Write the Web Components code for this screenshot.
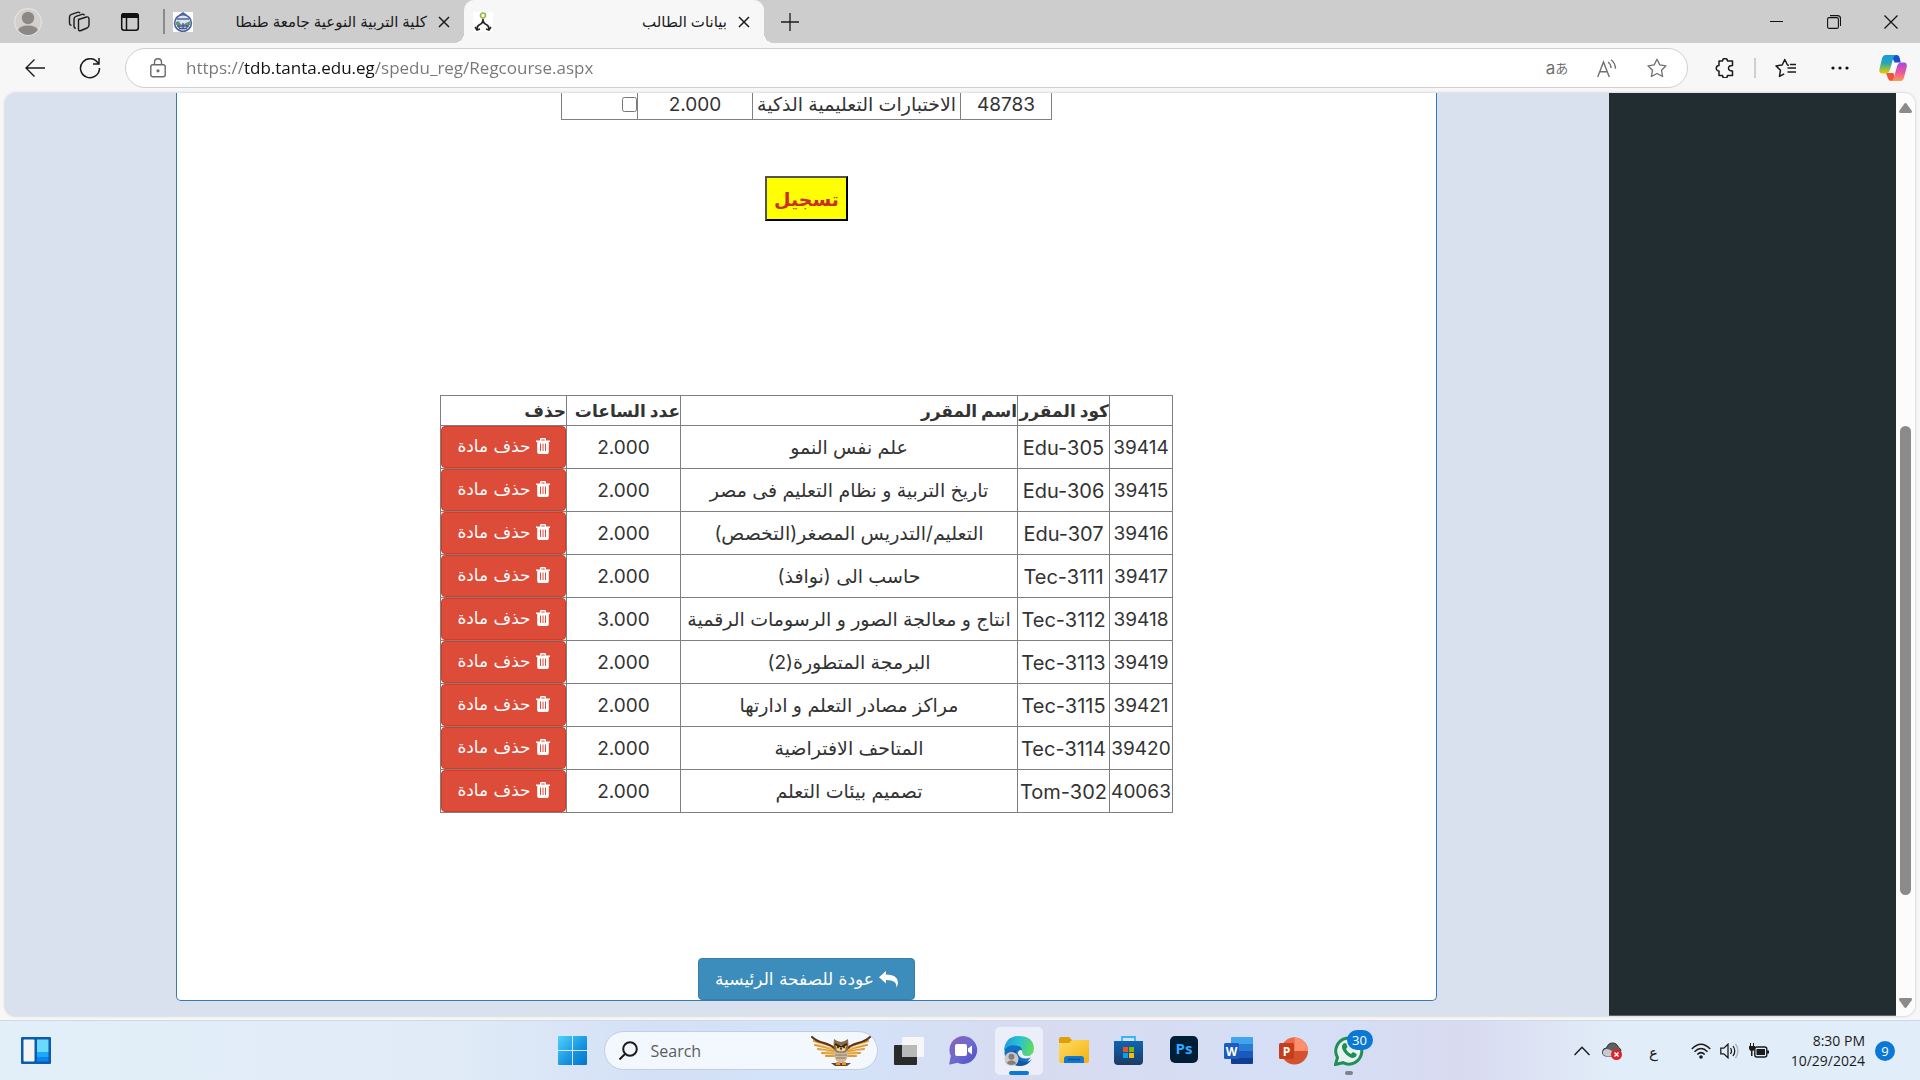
<!DOCTYPE html>
<html lang="ar">
<head>
<meta charset="utf-8">
<title>بيانات الطالب</title>
<style>
  html, body { height: 100%; }
  body { margin: 0; display: flex; flex-direction: column; background: #f7f7f7; overflow: hidden;
         font-family: "Open Sans", "DejaVu Sans", sans-serif; color: #1b1b1b; }
</style>
</head>
<body>
<tab-strip>
  <browser-tab label="كلية التربية النوعية جامعة طنطا">
    <svg slot="icon" width="20" height="20" viewBox="0 0 20 20"><rect width="20" height="20" fill="#fff"/><circle cx="10" cy="11" r="8.4" fill="#dfe6f3" stroke="#5262a0" stroke-width="1.6"/><path d="M7 3l3-2 3 2M4 7h12" stroke="#5262a0" stroke-width="1.6" fill="none"/><path d="M3 10q3-2 4 1t6 0 4-1v3H3z" fill="#5d9a72"/><path d="M4 14h12M6 16.500h8M6 13v3M10 11v5M14 13v3" stroke="#44558f" stroke-width="1.300"/></svg>
  </browser-tab>
  <browser-tab label="بيانات الطالب" active>
    <svg slot="icon" width="20" height="20" viewBox="0 0 20 20" fill="none"><rect width="20" height="20" fill="#fff"/><circle cx="10" cy="3.500" r="2.500" stroke="#94b83d" stroke-width="1.700"/><path d="M10 7v3M10 9q-1 3-4 4-2 1-2 4M10 9q1 3 4 4 2 1 2 4" stroke="#222" stroke-width="1.800"/><path d="M2 15l2 3 3-1M18 15l-2 3-3-1" stroke="#222" stroke-width="1.600"/></svg>
  </browser-tab>
</tab-strip>
<browser-toolbar></browser-toolbar>
<page-view>
  <content-panel>
    <course-picker></course-picker>
    <register-button>تسجيل</register-button>
    <course-table></course-table>
    <home-button>عودة للصفحة الرئيسية</home-button>
  </content-panel>
</page-view>
<task-bar></task-bar>

<script>
const define = (name, html, setup) => customElements.define(name, class extends HTMLElement {
  connectedCallback() {
    if (this.shadowRoot) return;
    const root = this.attachShadow({ mode: 'open' });
    root.innerHTML = `<style>:host,*{box-sizing:border-box}button{font:inherit;color:inherit;background:none;border:0;padding:0;margin:0}svg{display:block;flex:none}</style>` + html;
    if (setup) setup(this, root);
  }
});

/* ---------- browser window ---------- */
define('browser-tab', `
<style>
  :host { display: flex; flex: none; align-items: center; width: 300px; height: 43px; padding: 0 9px; position: relative; }
  :host([active]) { background: #f7f7f7; border-radius: 10px 10px 0 0; }
  :host([active])::before, :host([active])::after { content: ""; position: absolute; bottom: 0; width: 10px; height: 10px; }
  :host([active])::before { left: -10px; background: radial-gradient(circle at 0 0, #cdcdcd 10px, #f7f7f7 10px); }
  :host([active])::after { right: -10px; background: radial-gradient(circle at 100% 0, #cdcdcd 10px, #f7f7f7 10px); }
  .title { flex: 1; direction: rtl; font-size: 15px; line-height: 24px; white-space: nowrap; padding-bottom: 2px; }
  button { width: 22px; height: 22px; margin-left: 6px; display: grid; place-items: center; }
</style>
<slot name="icon"></slot><span class="title"></span>
<button aria-label="Close tab"><svg width="12" height="12" viewBox="0 0 12 12" stroke="#1b1b1b" stroke-width="1.500"><path d="M1 1l10 10M11 1L1 11"/></svg></button>
`, (el, root) => { root.querySelector('.title').textContent = el.getAttribute('label'); });

define('tab-strip', `
<style>
  :host { display: flex; flex: none; height: 43px; align-items: center; background: #cdcdcd; padding-right: 1px; }
  .lead { display: flex; flex: none; width: 163px; align-items: center; padding-left: 14px; gap: 23px; }
  button { display: grid; place-items: center; width: 28px; height: 28px; }
  .bar { width: 2px; height: 25px; background: #8a8a8a; margin-right: -1px; }
  .new { margin-left: 12px; }
  .win { margin-left: auto; display: flex; }
  .win button { width: 57px; }
</style>
<div class="lead">
  <button aria-label="Profile"><svg width="28" height="28" viewBox="0 0 28 28"><circle cx="14" cy="14" r="13.300" fill="#d2d0ce" stroke="#e4e3e2" stroke-width="1.200"/><circle cx="14" cy="10" r="6.200" fill="#8b8885"/><path d="M4 22q2-4.500 10-4.500T24 22q-4 5-10 5T4 22z" fill="#8b8885"/></svg></button>
  <button aria-label="Workspaces"><svg width="24" height="24" viewBox="0 0 24 24" fill="none" stroke="#1b1b1b" stroke-width="1.400" stroke-linejoin="round"><path d="M11.500 9.500l8-2.500q2.500-.5 2.500 2v6q0 2-2 3l-6 2.500q-2.500 1-2.500-1.500z"/><path d="M9 18q-2 .5-2-2V9q0-2 2-2.600l6-2q2-.6 2.500 1"/><path d="M4.500 15q-2 .5-2-2V7q0-2 2-2.700l6-2q2-.6 2.500 1"/></svg></button>
  <button aria-label="Tab actions"><svg width="20" height="20" viewBox="0 0 20 20" fill="none" stroke="#111" stroke-width="1.500"><rect x="1.700" y="1.700" width="16.600" height="16.600" rx="2.500"/><path d="M1 6V4q0-3 3-3h12q3 0 3 3v2z" fill="#111" stroke="none"/><path d="M6.500 6v12"/></svg></button>
</div>
<span class="bar"></span>
<slot></slot>
<button class="new" aria-label="New tab"><svg width="18" height="18" viewBox="0 0 18 18" stroke="#1b1b1b" stroke-width="1.300"><path d="M9 0v18M0 9h18"/></svg></button>
<div class="win">
  <button aria-label="Minimize"><svg width="13" height="13" viewBox="0 0 13 13" stroke="#111"><path d="M0 6.500h13"/></svg></button>
  <button aria-label="Restore"><svg width="14" height="14" viewBox="0 0 14 14" fill="none" stroke="#111" stroke-width="1.100"><rect x=".6" y="2.600" width="10.800" height="10.800" rx="1.500"/><path d="M3 .6h7.500q3 0 3 3V11"/></svg></button>
  <button aria-label="Close"><svg width="14" height="14" viewBox="0 0 14 14" stroke="#111" stroke-width="1.200"><path d="M.5.5l13 13M13.500.5l-13 13"/></svg></button>
</div>`);

define('browser-toolbar', `
<style>
  :host { display: flex; flex: none; height: 50px; align-items: center; background: #f7f7f7; padding: 0 12px 0 20px; }
  button { display: grid; place-items: center; width: 30px; height: 30px; flex: none; }
  .reload { margin-left: 25px; }
  .pill { display: flex; flex: 1; align-items: center; height: 40px; margin: 0 22px 0 20px; padding: 0 15px 0 24px; background: #fff; border: 1px solid #d0d0d0; border-radius: 20px; gap: 20px; }
  input { flex: 1; min-width: 0; border: 0; outline: 0; padding: 0; margin: 0; font: 17px/26px "Open Sans", sans-serif;
    color: #767676; -webkit-text-fill-color: transparent;
    background: linear-gradient(90deg, #767676 57px, #111 57px 188px, #767676 188px); -webkit-background-clip: text; background-clip: text; }
  .trans { display: flex; align-items: center; justify-content: center; font: 17px/30px Inter, "Noto Sans CJK JP", sans-serif; color: #707070; }
  .trans small { font: 13px/30px "Noto Sans CJK JP", sans-serif; }
  .right { display: flex; align-items: center; }
  .sep { width: 2px; height: 20px; background: #cfcfcf; margin: 0 14px; }
  .more { margin: 0 23px 0 25px; }
</style>
<button aria-label="Back"><svg width="20" height="18" viewBox="0 0 20 18" fill="none" stroke="#1b1b1b" stroke-width="1.400"><path d="M20 9H1M9.500.5L1 9l8.500 8.500"/></svg></button>
<button class="reload" aria-label="Refresh"><svg width="22" height="22" viewBox="0 0 22 22" fill="none" stroke="#1b1b1b" stroke-width="1.500"><path d="M19.500 7A9.500 9.500 0 1 0 20.500 11M20 1v6h-6"/></svg></button>
<div class="pill">
  <svg width="16" height="20" viewBox="0 0 16 20" fill="none" stroke="#6b6b6b" stroke-width="1.400"><rect x=".8" y="6.800" width="14.400" height="12" rx="2"/><path d="M4.500 6.500V4.300q0-3.500 3.500-3.500t3.500 3.500v2.200"/><circle cx="8" cy="12.800" r=".9" fill="#6b6b6b"/></svg>
  <input type="text" aria-label="Address" value="https://tdb.tanta.edu.eg/spedu_reg/Regcourse.aspx">
  <button class="trans" aria-label="Translate">a<small>あ</small></button>
  <button aria-label="Read aloud"><svg width="20" height="19" viewBox="0 0 20 19" fill="none" stroke="#707070" stroke-width="1.400"><path d="M.7 18L6.500 3 12.300 18M2.800 12.700h7.400M11 3q3 2 3 6M14 .7q4.500 3.500 4.500 9"/></svg></button>
  <button aria-label="Favorite"><svg width="20" height="20" viewBox="0 0 20 20" fill="none" stroke="#707070" stroke-width="1.300" stroke-linejoin="round"><path d="M10 1.200l2.800 5.700 6.200.9-4.500 4.400 1.100 6.300L10 15.500l-5.600 3 1.100-6.300L1 7.800l6.200-.9z"/></svg></button>
</div>
<div class="right">
  <button aria-label="Extensions"><svg width="20" height="20" viewBox="0 0 20 20" fill="none" stroke="#1b1b1b" stroke-width="1.500" stroke-linejoin="round"><path d="M4 3h3.500a2.500 2.500 0 0 1 5 0H17.500v4.500q-4 0-4 2.700t4 2.700V17.500h-5a2.500 2.500 0 0 1-5 0H4v-4.500a2.600 2.600 0 0 1 0-5.500z"/></svg></button>
  <span class="sep"></span>
  <button aria-label="Favorites list"><svg width="21" height="20" viewBox="0 0 21 20" fill="none" stroke="#1b1b1b" stroke-width="1.500" stroke-linejoin="round"><path d="M14 7.300l-1.500-.3L9.800 1.500 7.200 7l-6.200.9 4.500 4.300-1 6.200 4.700-2.500M12.500 10h8.500M12.500 14h8.500M15 6.500h6"/></svg></button>
  <button class="more" aria-label="More"><svg width="18" height="4" viewBox="0 0 18 4" fill="#111"><circle cx="2" cy="2" r="1.600"/><circle cx="9" cy="2" r="1.600"/><circle cx="16" cy="2" r="1.600"/></svg></button>
  <button aria-label="Copilot"><svg width="28" height="26" viewBox="0 0 28 26"><defs><linearGradient id="a" x1="0" y1="0" x2="0" y2="1"><stop stop-color="#159be0"/><stop offset=".45" stop-color="#2aa6b8"/><stop offset=".75" stop-color="#96c13a"/><stop offset="1" stop-color="#f2c400"/></linearGradient><linearGradient id="b" x1="0" y1="0" x2="0" y2="1"><stop stop-color="#a24be6"/><stop offset=".5" stop-color="#e8559a"/><stop offset="1" stop-color="#fb9a56"/></linearGradient></defs><path d="M12 0h5.500q2.500 0 3.200 3l1 4.500h-6z" fill="#1a4bd0"/><path d="M7 18l2 5.500q.8 2.500 3.500 2.500h4l-2-8z" fill="#f0553a"/><path d="M6.500 0H17q-2 .5-3 4l-3 10.500q-1.200 4-4.500 4H3.500Q-.5 18.500.5 14L3 3.500Q4 0 6.500 0z" fill="url(#a)"/><path d="M21.500 26H12q2-.5 3-4l3-10.500q1-4 4.500-4H25q3.500 0 2.700 4.500L25 22.500Q24 26 21.500 26z" fill="url(#b)"/><path d="M14.500 8h4l-3.500 10h-4z" fill="#fff" opacity=".85"/></svg></button>
</div>`);

/* ---------- web page ---------- */
define('page-view', `
<style>
  :host { display: flex; flex: 1; min-height: 0; margin: 0 5px 4px; border-radius: 11px; overflow: hidden; background: #d8e1ed; box-shadow: 0 0 2px 1px #dcdcdc; }
  main { flex: 1; display: flex; padding: 0 172px 15px 171px; }
  aside { width: 287px; background: #222d32; border-bottom: 1px solid #5a6367; }
  .scroll { width: 19px; display: flex; flex-direction: column; align-items: center; justify-content: space-between; background: #fcfcfc; padding: 10px 0 8px; }
  .thumb { width: 11px; height: 469px; border-radius: 6px; background: #8b8b8b; margin: 313px 0 auto; }
</style>
<main><slot></slot></main>
<aside></aside>
<div class="scroll">
  <svg width="13" height="10" viewBox="0 0 13 10" fill="#8b8b8b"><path d="M5.300.8q1.200-1.500 2.400 0l5 7q.8 2-1 2.200H1.300Q-.5 9.800.3 7.800z"/></svg>
  <div class="thumb"></div>
  <svg width="13" height="10" viewBox="0 0 13 10" fill="#8b8b8b"><path d="M5.300 9.200q1.200 1.500 2.400 0l5-7q.8-2-1-2.200H1.300Q-.5.2.3 2.200z"/></svg>
</div>`);

define('content-panel', `
<style>
  :host { flex: 1; display: flex; flex-direction: column; align-items: center; direction: rtl; background: #fff; color: #333;
    border: 1px solid #337ab7; border-top: 0; border-radius: 0 0 5px 5px; font: 19px/29px Inter, "DejaVu Sans", sans-serif; }
</style><slot></slot>`);

const tableCss = `
  table { border-collapse: collapse; table-layout: fixed; }
  td, th { border: 1px solid #808080; padding: 0; white-space: nowrap; text-align: center; }
  .code { font-size: 20px; }`;

define('course-picker', `
<style>:host { display: block; } ${tableCss}
  table { width: 490px; margin-top: -4px; }
  td { height: 30px; line-height: 28px; }
  .pick { text-align: right; }
  input { display: block; width: 15px; height: 15px; margin: 0; }
</style>
<table><colgroup><col style="width:91px"><col style="width:208px"><col style="width:115px"><col style="width:76px"></colgroup>
<tr><td>48783</td><td>الاختبارات التعليمية الذكية</td><td>2.000</td><td class="pick"><input type="checkbox" aria-label="الاختبارات التعليمية الذكية"></td></tr></table>`);

define('register-button', `
<style>
  :host { display: block; margin: 56px 0 174px; }
  button { display: block; width: 83px; height: 45px; background: #ff0; border: 2px outset #000; color: #c9302c; font: bold 19px/30px "DejaVu Sans", sans-serif; }
</style><button type="button"><slot></slot></button>`);

define('delete-button', `
<style>
  :host { display: block; }
  button { display: flex; width: 100%; height: 42px; align-items: center; justify-content: center; gap: 5px; background: #dd4b39; border: 1px solid #d73925; border-radius: 4px; color: #fff; font: 17px/24px "DejaVu Sans", sans-serif; padding-bottom: 3px; }
</style>
<button type="button"><svg width="14" height="16" viewBox="0 0 14 16"><path d="M4 2.500V1.300Q4 0 5.300 0h3.400Q10 0 10 1.300v1.200h4V4h-1.200v10q0 2-1.800 2H3q-1.800 0-1.800-2V4H0V2.500zm1.300 0h3.400v-1H5.300z" fill="#fff"/><path d="M4.500 5.500V13M7 5.500V13M9.500 5.500V13" stroke="#dd4b39" stroke-width="1"/></svg><slot></slot></button>`);

const courses = [
  ['39414', 'Edu-305', 'علم نفس النمو', '2.000'],
  ['39415', 'Edu-306', 'تاريخ التربية و نظام التعليم فى مصر', '2.000'],
  ['39416', 'Edu-307', 'التعليم/التدريس المصغر(التخصص)', '2.000'],
  ['39417', 'Tec-3111', 'حاسب الى (نوافذ)', '2.000'],
  ['39418', 'Tec-3112', 'انتاج و معالجة الصور و الرسومات الرقمية', '3.000'],
  ['39419', 'Tec-3113', 'البرمجة المتطورة(2)', '2.000'],
  ['39421', 'Tec-3115', 'مراكز مصادر التعلم و ادارتها', '2.000'],
  ['39420', 'Tec-3114', 'المتاحف الافتراضية', '2.000'],
  ['40063', 'Tom-302', 'تصميم بيئات التعلم', '2.000'],
];
define('course-table', `
<style>:host { display: block; } ${tableCss}
  table { width: 732px; }
  th { height: 30px; line-height: 28px; text-align: right; font-size: 17px; font-weight: bold; }
  td { height: 43px; line-height: 30px; }
  td:not(:last-child) { padding-top: 2px; }
</style>
<table><colgroup><col style="width:63px"><col style="width:92px"><col style="width:337px"><col style="width:114px"><col style="width:126px"></colgroup>
<thead><tr><th></th><th>كود المقرر</th><th>اسم المقرر</th><th>عدد الساعات</th><th>حذف</th></tr></thead>
<tbody>${courses.map(([id, code, name, hours]) => `<tr><td>${id}</td><td class="code"><bdi>${code}</bdi></td><td>${name}</td><td>${hours}</td><td><delete-button>حذف مادة</delete-button></td></tr>`).join('')}</tbody></table>`);

define('home-button', `
<style>
  :host { display: block; margin-top: auto; }
  button { display: flex; width: 217px; height: 42px; align-items: center; justify-content: center; gap: 5px; background: #3c8dbc; border: 1px solid #367fa9; border-radius: 4px; color: #fff; font: 17px/24px "DejaVu Sans", sans-serif; }
</style>
<button type="button"><svg width="19" height="17" viewBox="0 0 19 17" fill="#fff"><path d="M7 0v3.500q11.500 0 12 8 0 3-2 5.500 1-4-1.500-6T7 9v3.500L0 6.200z"/></svg><slot></slot></button>`);

/* ---------- taskbar ---------- */
const icons = {
  view: `<svg width="30" height="28" viewBox="0 0 30 28"><rect y="8" width="23" height="20" rx="1" fill="#2b2b2b"/><rect x="8" width="22" height="20" rx="1" fill="#f7f7f7"/><path d="M8 8h15v12H8z" fill="#b9b9b9"/></svg>`,
  chat: `<svg width="29" height="29" viewBox="0 0 29 29"><defs><linearGradient id="c" x1="0" y1="0" x2="1" y2="1"><stop stop-color="#8b62b0"/><stop offset=".5" stop-color="#6d6ad0"/><stop offset="1" stop-color="#4c4fc4"/></linearGradient></defs><path d="M14.500 0a14 14 0 1 1-6 26.800L1 28.500q-1 0-.7-1L1.800 20A14 14 0 0 1 14.500 0z" fill="url(#c)"/><rect x="6" y="8" width="12" height="12" rx="2" fill="#fff"/><path d="M19 12.500l4-3v9l-4-3z" fill="#fff"/></svg>`,
  edge: `<svg width="30" height="30" viewBox="0 0 30 30"><defs><linearGradient id="e" x1="0" y1=".3" x2="1" y2=".5"><stop stop-color="#1b9de2"/><stop offset=".5" stop-color="#2cc3cf"/><stop offset="1" stop-color="#62dc5c"/></linearGradient></defs><circle cx="14" cy="16" r="13.500" fill="#1470c5"/><path d="M0 15Q1 0 15 0q14 0 15 12 0 8-7.500 8-6 0-4.500-4 1-6-6-6.500Q3 8.500 0 15z" fill="url(#e)"/><path d="M12 14q-2 10 9 12 4 .5 7-3-5 8-14 7-9-2-8-10 1-5 6-6z" fill="#15579f"/><path d="M13.500 17q1.500-4 4.500-2.500 0 5.500 4.500 5.500 4 0 6-2.500-1 5-6 5-7 .5-9-5.500z" fill="#eef0fa"/><circle cx="7.500" cy="23" r="7" fill="#ccc9c6"/><circle cx="7.500" cy="20.700" r="3" fill="#817e7b"/><path d="M2.500 27q5-5.500 10 0-5 4-10 0z" fill="#817e7b"/></svg>`,
  files: `<svg width="30" height="27" viewBox="0 0 30 27"><defs><linearGradient id="f" x1="0" y1="0" x2="1" y2="1"><stop stop-color="#ffdc66"/><stop offset="1" stop-color="#f5b10e"/></linearGradient></defs><path d="M0 2q0-2 2-2h8l3 3h15q2 0 2 2v4H0z" fill="#e0a004"/><path d="M0 6h10l3-3h15q2 0 2 2v19q0 2-2 2H2q-2 0-2-2z" fill="url(#f)"/><path d="M5 26v-4q0-3 3-3h14q3 0 3 3v4z" fill="#1278cf"/><path d="M9 22.500h12" stroke="#0b4f94" stroke-width="1.500"/></svg>`,
  store: `<svg width="29" height="29" viewBox="0 0 29 29"><defs><linearGradient id="s" x1="0" y1="0" x2="0" y2="1"><stop stop-color="#0c65b4"/><stop offset="1" stop-color="#1e3a63"/></linearGradient></defs><path d="M8 6V1h13v5" fill="none" stroke="#35b8ee" stroke-width="1.800"/><path d="M0 5h29v20q0 4-4 4H4q-4 0-4-4z" fill="url(#s)"/><path d="M9 11h5v5H9z" fill="#f25022"/><path d="M15 11h5v5h-5z" fill="#7fba00"/><path d="M9 17h5v5H9z" fill="#00a4ef"/><path d="M15 17h5v5h-5z" fill="#ffb900"/></svg>`,
  ps: `<svg width="28" height="29" viewBox="0 0 28 29"><rect width="28" height="27" rx="5" fill="#001e36"/><text x="14" y="18" text-anchor="middle" font-family="Open Sans" font-weight="700" font-size="15" fill="#31a8ff">Ps</text></svg>`,
  word: `<svg width="29" height="28" viewBox="0 0 29 28"><path d="M8 0h20q1 0 1 1v6H7V1q0-1 1-1z" fill="#41a5ee"/><path d="M7 7h22v7H7z" fill="#2b7cd3"/><path d="M7 14h22v7H7z" fill="#185abd"/><path d="M7 21h22v5q0 1-1 1H8q-1 0-1-1z" fill="#103f91"/><rect y="6" width="15" height="16" rx="1.500" fill="#1b5cbe"/><text x="7.500" y="18.500" text-anchor="middle" font-family="Open Sans" font-weight="700" font-size="12" fill="#fff">W</text></svg>`,
  ppt: `<svg width="29" height="28" viewBox="0 0 29 28"><circle cx="15.500" cy="14" r="13.500" fill="#d35230"/><path d="M15.500.5A13.500 13.500 0 0 0 2 14h13.500z" fill="#ed6c47"/><path d="M15.500.5A13.500 13.500 0 0 1 29 14H15.500z" fill="#ff8f6b"/><rect y="6" width="15" height="16" rx="1.500" fill="#c43e1c"/><text x="7.500" y="18.500" text-anchor="middle" font-family="Open Sans" font-weight="700" font-size="12" fill="#fff">P</text></svg>`,
  wa: `<svg width="30" height="30" viewBox="0 0 30 30"><path d="M1.500 28.500l2-7A13 13 0 1 1 9 26.700z" fill="#e8f1f0" stroke="#1f8f58" stroke-width="3"/><path d="M9 8q2-2 3.500 0l1 3-1.500 2q1.500 3.500 5 5l2-2 3 1.500q1.500 1 0 3-2.500 2.500-6.500.500Q10 18 8 12q-.5-2.500 1-4z" fill="#1f8f58"/></svg>`,
};
const task = (label, icon, cls = '', extra = '') => `<button class="app ${cls}" aria-label="${label}">${icons[icon]}${extra}</button>`;
const owlWing = `<g fill="none" stroke-linecap="round"><path d="M26 12Q15 8 3 5M25 14Q14 11 4 9M25 16Q15 14 7 13M26 18Q18 17 11 17M27 20Q20 20 15 20" stroke="#dd9a35" stroke-width="2.200"/><path d="M24 14Q14 10 6 8M25 17Q17 15 10 14M26 19Q20 18 14 18" stroke="#f9cf7c" stroke-width=".8"/><path d="M1 1q4 4 12 6t12 7" stroke="#5a3418" stroke-width="2"/></g>`;

define('task-bar', `
<style>
  :host { display: grid; grid-template-columns: 1fr auto 1fr; flex: none; align-items: center; height: 60px; border-top: 1px solid #cdd8e8;
    background: linear-gradient(90deg, #e2eef8 0, #e0ebf7 24%, #d4e0f6 34%, #d3e4fa 42%, #d7dbf0 54%, #d5dff6 68%, #d8daf0 76%, #e1edf8 84%, #e1eef9); }
  .side { padding-left: 21px; justify-self: start; }
  .mid { display: flex; align-items: center; gap: 7px; padding-left: 1px; }
  .app { width: 48px; height: 48px; display: grid; place-items: center; position: relative; border-radius: 5px; }
  .on { background: #eceffa; }
  .on::after, .run::after { content: ""; position: absolute; bottom: 0; left: 14px; width: 20px; height: 4px; border-radius: 2px; background: #0a78d4; }
  .run::after { left: 20px; width: 8px; background: #80838c; }
  .badge { position: absolute; right: 0; top: 3px; width: 26px; height: 20px; border-radius: 10px; background: #0a78d4; color: #fff; font: 13px/20px "Open Sans", sans-serif; }
  .search { display: flex; align-items: center; width: 274px; height: 39px; padding: 0 6px 0 14px; gap: 13px; border-radius: 20px; background: #f3f7fe; border: 1px solid #c4cde0; }
  input { flex: 1; min-width: 0; border: 0; outline: 0; background: none; padding: 0; font: 16px/24px "Open Sans", sans-serif; color: #5c5c5c; }
  input::placeholder { color: #5c5c5c; }
  .tray { display: flex; align-items: center; justify-self: end; padding-right: 25px; }
  .lang { width: 12px; margin: 0 30px 0 27px; font: 15px/24px "DejaVu Sans", sans-serif; padding-top: 4px; }
  .net { display: flex; gap: 9px; align-items: center; }
  .clock { width: 96px; margin-right: 10px; text-align: right; font: 14px/20px "Open Sans", sans-serif; white-space: nowrap; }
  .count { width: 20px; height: 20px; border-radius: 50%; background: #0a78d4; color: #fff; font: 13px/20px "Open Sans", sans-serif; text-align: center; }
  .cloud { margin-left: 12px; }
</style>
<button class="side" aria-label="Widgets"><svg width="30" height="27" viewBox="0 0 30 27"><rect width="30" height="27" rx="1" fill="#0b5cad"/><rect x="2.500" y="2.500" width="11" height="22" rx="1" fill="#f4f4f4"/><path d="M16 2.500h11.500V15H16z" fill="#69d9ff"/><path d="M16 15h11.500v5H16z" fill="#1ea7ff"/><path d="M16 20h11.500v4.500H16z" fill="#0a84f0"/></svg></button>
<div class="mid">
  <button class="app" aria-label="Start"><svg width="29" height="29" viewBox="0 0 29 29"><defs><linearGradient id="w" gradientUnits="userSpaceOnUse" x1="0" y1="0" x2="29" y2="29"><stop stop-color="#4fd3fb"/><stop offset=".6" stop-color="#1592e0"/><stop offset="1" stop-color="#0573cf"/></linearGradient></defs><path d="M0 1q0-1 1-1h13v14H0zM15 0h13q1 0 1 1v13H15zM0 15h14v14H1q-1 0-1-1zM15 15h14v13q0 1-1 1H15z" fill="url(#w)"/></svg></button>
  <label class="search">
    <svg width="19" height="19" viewBox="0 0 19 19" fill="none" stroke="#1b1b1b" stroke-width="2"><circle cx="11" cy="8" r="6.800"/><path d="M6 13l-5.500 5.500"/></svg>
    <input type="search" placeholder="Search" aria-label="Search">
    <svg width="60" height="30" viewBox="0 0 60 30"><g>${owlWing}</g><g transform="translate(60 0) scale(-1 1)">${owlWing}</g><path d="M20 27h20l-4 3H24z" fill="#6c452c"/><ellipse cx="30" cy="18" rx="7" ry="9" fill="#cdbb9d"/><path d="M25 16h10M24 19h12M25 22h10" stroke="#94785a"/><path d="M23 3q4 3 7 3t7-3q1 10-1 12-6 3-12 0-2-4-1-12z" fill="#8a6a4a"/><path d="M25 14q5 3 10 0l-5-5z" fill="#e4d8c0"/><circle cx="27" cy="11" r="2.200" fill="#f5c21b"/><circle cx="33" cy="11" r="2.200" fill="#f5c21b"/><circle cx="27" cy="11" r="1" fill="#111"/><circle cx="33" cy="11" r="1" fill="#111"/><path d="M24 8l6 3 6-3" stroke="#2b1d12" stroke-width="1.500" fill="none"/><path d="M29 12h2l-1 3z" fill="#222"/><path d="M25 26h4v3h-4zM31 26h4v3h-4z" fill="#e8932c"/></svg>
  </label>
  ${task('Task view', 'view')}${task('Chat', 'chat')}${task('Microsoft Edge', 'edge', 'on')}${task('File Explorer', 'files')}${task('Microsoft Store', 'store')}${task('Photoshop', 'ps')}${task('Word', 'word')}${task('PowerPoint', 'ppt')}${task('WhatsApp', 'wa', 'run', '<span class="badge">30</span>')}
</div>
<div class="tray">
  <svg width="16" height="10" viewBox="0 0 16 10" fill="none" stroke="#1b1b1b" stroke-width="1.500"><path d="M.5 9L8 1.300 15.500 9"/></svg>
  <svg class="cloud" width="20" height="18" viewBox="0 0 20 18"><path d="M4 14q-4-.5-3.500-4.500Q1 6 4.500 6 6 1 10.500 1t6 4.500Q19 6.500 19 9l-7 5z" fill="#5f6062" stroke="#333"/><path d="M4 14q-4-1-3-4.500Q3 6 7 7.500L14 11l-4 3z" fill="#c7c9cb"/><circle cx="14.500" cy="12.500" r="5.500" fill="#d9252f"/><path d="M12.500 10.500l4 4M16.500 10.500l-4 4" stroke="#fff" stroke-width="1.500"/></svg>
  <span class="lang">ع</span>
  <div class="net">
    <svg width="20" height="16" viewBox="0 0 20 16" fill="none" stroke="#1b1b1b" stroke-width="1.500"><path d="M.8 6q9.200-9.500 18.400 0M3.500 8.800q6.500-6.500 13 0M6.300 11.500q3.700-3.700 7.400 0"/><circle cx="10" cy="14" r="1.800" fill="#1b1b1b" stroke="none"/></svg>
    <svg width="20" height="16" viewBox="0 0 20 16" fill="none" stroke="#1b1b1b" stroke-width="1.300"><path d="M.8 5.200h3L8 1.200v13.600l-4.200-4h-3zM10.500 5q2 3 0 6M13 3q3.500 5 0 10"/><path d="M15.500 1q5 7 0 14" stroke="#a9b2bb"/></svg>
    <svg width="20" height="16" viewBox="0 0 20 16"><rect x="5.800" y="4" width="12" height="10" rx="2" fill="none" stroke="#1b1b1b" stroke-width="1.400"/><rect x="7.500" y="6" width="8.500" height="6" fill="#1b1b1b"/><path d="M18 7.500h2v3h-2z" fill="#1b1b1b"/><path d="M1 0v3H0v2q0 2.500 2 3v5h1.500V8q2.500-.5 2.500-3V3H5V0H4v3H2V0z" fill="#1b1b1b"/></svg>
  </div>
  <div class="clock"><div>8:30 PM</div><div>10/29/2024</div></div>
  <div class="count">9</div>
</div>`);
</script>
</body>
</html>
